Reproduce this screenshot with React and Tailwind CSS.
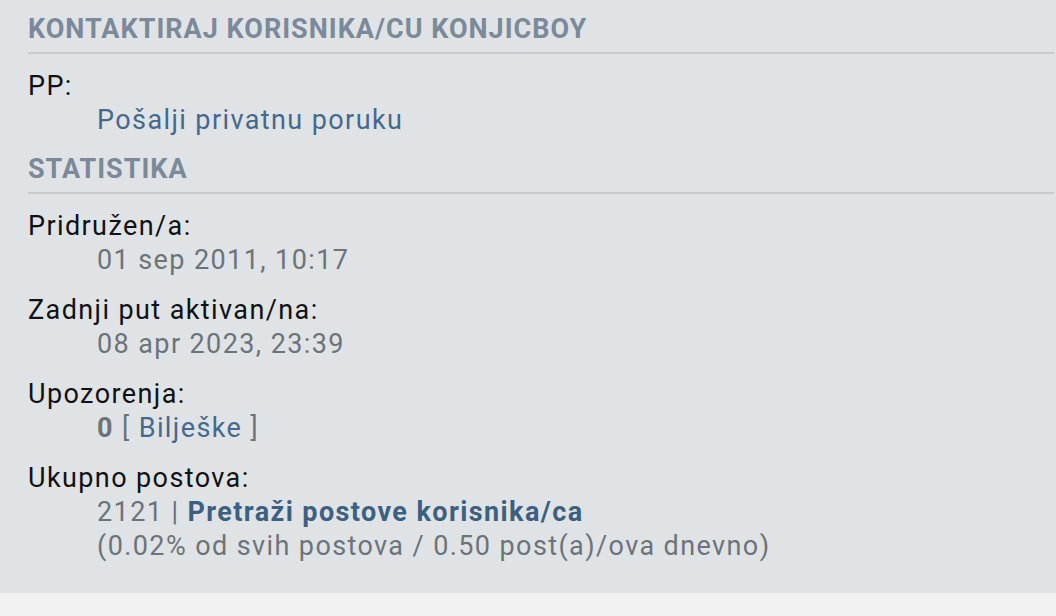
import React from 'react';

const Heading = ({ children, first }) => (
    <h3 className={`${first ? 'pt-[12px]' : 'pt-[15px]'} pb-[6px] leading-[34px] text-[27px] tracking-[1px] font-bold uppercase text-[#7b8998] border-b-2 border-[#c8cccf]`}>
        {children}
    </h3>
);

const Entry = ({ label, children, first }) => (
    <div className={first ? 'mt-[15px]' : 'mt-[16px]'}>
        <dt className="text-[#111111]">{label}</dt>
        <dd className="ml-[69px]">{children}</dd>
    </div>
);

const App = () => {
    return (
        <div className="min-h-[616px] bg-[#f2f2f2] text-[27px] leading-[34px] tracking-[1.4px]" style={{ fontFamily: 'Roboto, "Noto Sans", sans-serif' }}>
            <div className="bg-[#dfe3e6] pl-[28px] pr-[2px] pb-[30px]">
                <Heading first>Kontaktiraj korisnika/cu konjicboy</Heading>
                <dl>
                    <Entry label="PP:" first>
                        <a href="#" className="text-[#45698c]">Pošalji privatnu poruku</a>
                    </Entry>
                </dl>

                <Heading>Statistika</Heading>
                <dl className="text-[#6c7379]">
                    <Entry label="Pridružen/a:" first>01 sep 2011, 10:17</Entry>
                    <Entry label="Zadnji put aktivan/na:">08 apr 2023, 23:39</Entry>
                    <Entry label="Upozorenja:">
                        <strong className="font-bold text-[#6c7379]">0</strong> [ <a href="#" className="text-[#45698c]">Bilješke</a> ]
                    </Entry>
                    <Entry label="Ukupno postova:">
                        2121 | <a href="#" className="font-bold text-[#3d5f80]">Pretraži postove korisnika/ca</a>
                        <br />
                        (0.02% od svih postova / 0.50 post(a)/ova dnevno)
                    </Entry>
                </dl>
            </div>
        </div>
    );
};

export default App;
